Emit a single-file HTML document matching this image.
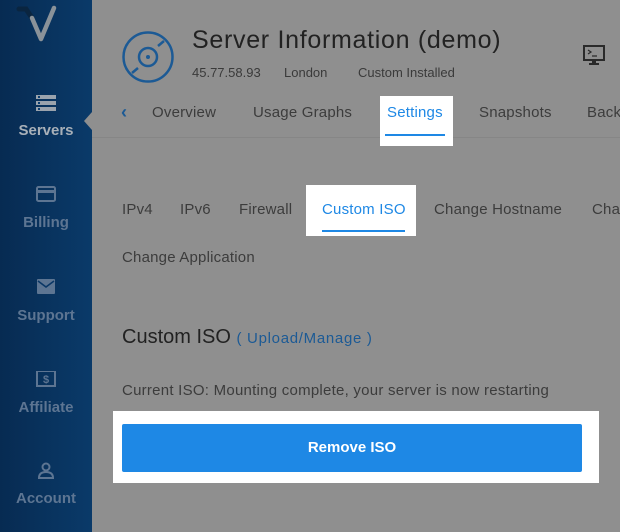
<!DOCTYPE html>
<html><head><meta charset="utf-8"><style>
*{margin:0;padding:0;box-sizing:border-box}
body{width:620px;height:532px;overflow:hidden;background:#8f8f8f;font-family:"Liberation Sans",sans-serif;position:relative}
.sb{position:absolute;left:0;top:0;width:92px;height:532px;background:linear-gradient(90deg,#072b52,#0a3a69)}
.sb .it{position:absolute;left:0;width:92px;text-align:center;color:#5d7592;font-weight:bold;font-size:15px}
.sb .it svg{display:block;margin:0 auto 10px}
.t{position:absolute;white-space:nowrap}
.nav{font-size:15px;color:#3c3c3c;letter-spacing:0.2px}
.wb{position:absolute;background:#fff}
</style></head><body>
<div class="sb">
 <svg style="position:absolute;left:16px;top:4px" width="42" height="38" viewBox="0 0 42 38"><path d="M3 5 L10 5 L16 14" stroke="#0a2540" stroke-width="5" fill="none" stroke-linecap="round"/><path d="M16 14 L25 35 L38 4" stroke="#8a9299" stroke-width="4.5" fill="none" stroke-linecap="round" stroke-linejoin="round"/></svg>
 <div class="it" style="top:94px;color:#a8b0b8"><svg width="22" height="18" viewBox="0 0 22 18"><rect x="1" y="1" width="20" height="4" fill="#9aa3ad"/><rect x="1" y="7" width="20" height="4" fill="#9aa3ad"/><rect x="1" y="13" width="20" height="4" fill="#9aa3ad"/><rect x="3" y="2" width="2" height="2" fill="#0b3d6f"/><rect x="3" y="8" width="2" height="2" fill="#0b3d6f"/><rect x="3" y="14" width="2" height="2" fill="#0b3d6f"/></svg>Servers</div>
 <div style="position:absolute;left:84px;top:112px;width:0;height:0;border-top:9px solid transparent;border-bottom:9px solid transparent;border-right:8px solid #8f8f8f"></div>
 <div class="it" style="top:186px"><svg width="20" height="18" viewBox="0 0 20 18"><rect x="1" y="1" width="18" height="14" rx="1.5" fill="none" stroke="#5d7592" stroke-width="2"/><rect x="1" y="4" width="18" height="3" fill="#5d7592"/></svg>Billing</div>
 <div class="it" style="top:279px"><svg width="20" height="18" viewBox="0 0 20 18"><rect x="1" y="0" width="18" height="15" rx="1" fill="#5d7592"/><path d="M2 2 L10 8 L18 2" stroke="#0a3766" stroke-width="1.6" fill="none"/></svg>Support</div>
 <div class="it" style="top:371px"><svg width="20" height="18" viewBox="0 0 20 18"><rect x="1" y="0" width="18" height="15" fill="none" stroke="#5d7592" stroke-width="2"/><text x="10" y="12" font-size="11" font-weight="bold" text-anchor="middle" fill="#5d7592" font-family="Liberation Sans">$</text></svg>Affiliate</div>
 <div class="it" style="top:462px"><svg width="20" height="18" viewBox="0 0 20 18"><circle cx="10" cy="5" r="3.5" fill="none" stroke="#5d7592" stroke-width="2"/><path d="M3 16 Q3 10 10 10 Q17 10 17 16 Z" fill="none" stroke="#5d7592" stroke-width="2"/></svg>Account</div>
</div>

<svg style="position:absolute;left:122px;top:31px" width="54" height="54" viewBox="0 0 54 54"><circle cx="26" cy="26" r="24.5" fill="none" stroke="#1c5a95" stroke-width="2.5"/><circle cx="26" cy="26" r="9" fill="none" stroke="#1c5a95" stroke-width="2.5"/><circle cx="26" cy="26" r="2" fill="#1c5a95"/><path d="M36 15 L42 10 M16 37 L10 42" stroke="#1c5a95" stroke-width="2.5"/></svg>
<div class="t" style="left:192px;top:26px;font-size:25px;color:#222;letter-spacing:0.7px">Server Information (demo)</div>
<div class="t" style="left:192px;top:65px;font-size:13px;color:#3a3a3a">45.77.58.93</div>
<div class="t" style="left:284px;top:65px;font-size:13px;color:#3a3a3a">London</div>
<div class="t" style="left:358px;top:65px;font-size:13px;color:#3a3a3a">Custom Installed</div>
<svg style="position:absolute;left:583px;top:45px" width="24" height="22" viewBox="0 0 24 22"><rect x="1" y="1" width="20" height="14" fill="none" stroke="#2a2a2a" stroke-width="2"/><path d="M5 5 L8 7 L5 9 M9 11 H14" stroke="#2a2a2a" stroke-width="1.2" fill="none"/><rect x="9" y="15" width="4" height="3" fill="#2a2a2a"/><rect x="6" y="18" width="10" height="2" fill="#2a2a2a"/></svg>

<div style="position:absolute;left:92px;top:137px;width:528px;height:1px;background:#868686"></div>
<div class="t" style="left:121px;top:102px;font-size:18px;color:#1c5a95;font-weight:bold">‹</div>
<div class="t nav" style="left:152px;top:104px">Overview</div>
<div class="t nav" style="left:253px;top:104px">Usage Graphs</div>
<div class="wb" style="left:380px;top:96px;width:73px;height:50px"></div>
<div class="t nav" style="left:387px;top:104px;color:#1e88e5">Settings</div>
<div style="position:absolute;left:385px;top:134px;width:60px;height:2px;background:#1e88e5"></div>
<div class="t nav" style="left:479px;top:104px">Snapshots</div>
<div class="t nav" style="left:587px;top:104px">Back</div>

<div class="t nav" style="left:122px;top:201px">IPv4</div>
<div class="t nav" style="left:180px;top:201px">IPv6</div>
<div class="t nav" style="left:239px;top:201px">Firewall</div>
<div class="wb" style="left:306px;top:185px;width:110px;height:51px"></div>
<div class="t nav" style="left:322px;top:201px;color:#1e88e5">Custom ISO</div>
<div style="position:absolute;left:322px;top:230px;width:83px;height:2px;background:#1e88e5"></div>
<div class="t nav" style="left:434px;top:201px">Change Hostname</div>
<div class="t nav" style="left:592px;top:201px">Cha</div>
<div class="t nav" style="left:122px;top:249px">Change Application</div>

<div class="t" style="left:122px;top:326px;font-size:20px;color:#222">Custom ISO <span style="font-size:15px;color:#1c5a95;letter-spacing:0.7px">( Upload/Manage )</span></div>
<div class="t nav" style="left:122px;top:382px;letter-spacing:0.25px">Current ISO: Mounting complete, your server is now restarting</div>

<div class="wb" style="left:113px;top:411px;width:486px;height:72px"></div>
<div style="position:absolute;left:122px;top:424px;width:460px;height:48px;background:#1e88e5;border-radius:2px;color:#fff;font-weight:bold;font-size:15px;text-align:center;line-height:48px">Remove ISO</div>
</body></html>
